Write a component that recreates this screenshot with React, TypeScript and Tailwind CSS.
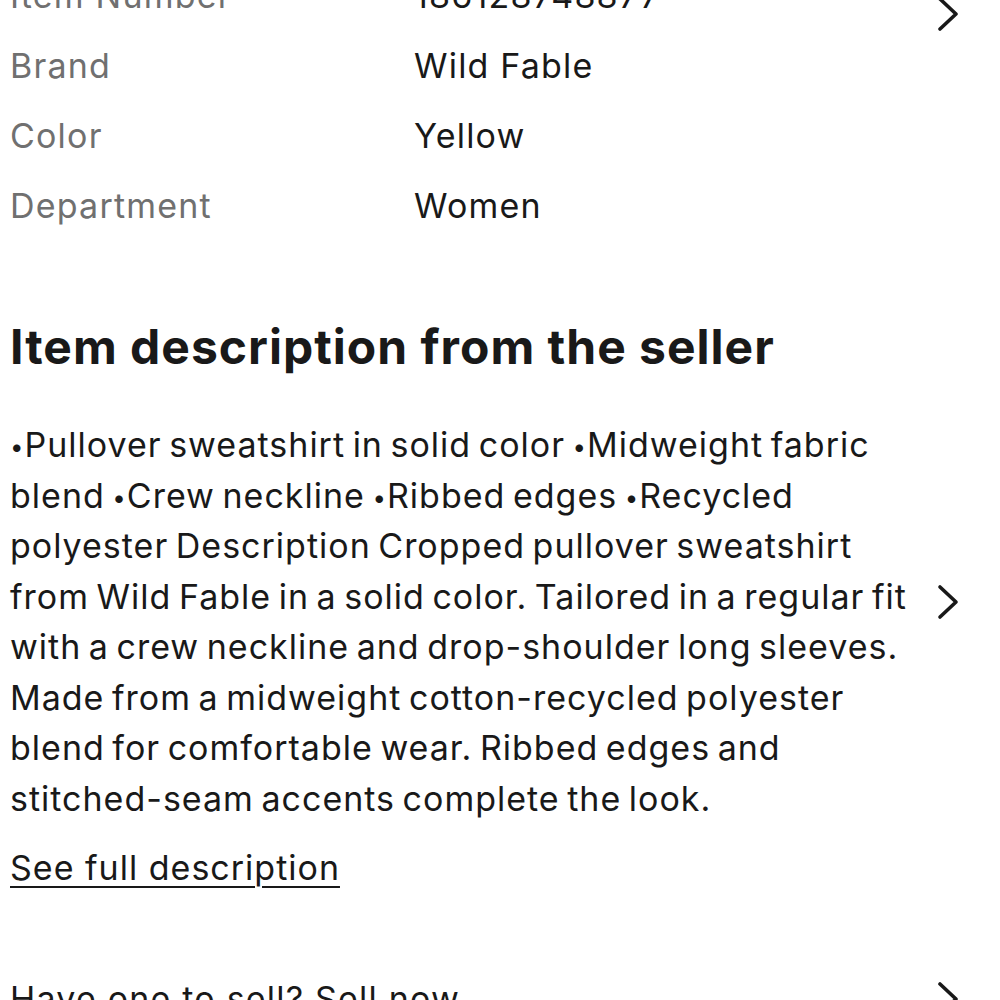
import React from 'react';

const Chevron: React.FC<{ className?: string }> = ({ className }) => (
  <svg className={className} width="24" height="36" viewBox="0 0 24 36" fill="none">
    <polyline points="4,3 20,18 4,33" stroke="#191919" strokeWidth="3.6" strokeLinecap="round" strokeLinejoin="round" />
  </svg>
);

const specs = [
  ['Item Number', '186128748877'],
  ['Brand', 'Wild Fable'],
  ['Color', 'Yellow'],
  ['Department', 'Women'],
];

// small bullet like the original font's
const B = () => <span className="text-[24px] leading-none align-[2px]">•</span>;

export default function App() {
  return (
    <div className="w-[1000px] h-[1000px] overflow-hidden bg-white text-[#191919] font-['Inter',sans-serif]">
      <div className="-mt-[40px]">
        <div className="flex pl-[10px] pr-[40px]">
          <div className="flex-1">
            {specs.map(([k, v]) => (
              <div key={k} className="flex h-[70px] items-center text-[34px] tracking-[1.2px]">
                <span className="w-[404px] text-[#707070]">{k}</span>
                <span>{v}</span>
              </div>
            ))}
          </div>
          <Chevron className="mt-[36px]" />
        </div>

        <h2 className="pl-[10px] mt-[77px] text-[48px] font-bold tracking-[1px] leading-[60px]">
          Item description from the seller
        </h2>

        <div className="flex pl-[10px] pr-[40px] mt-[43px]">
          <p className="flex-1 text-[34px] leading-[50.5px] tracking-[1px] [word-spacing:-3px] whitespace-nowrap">
            <B />Pullover sweatshirt in solid color <B />Midweight fabric
            <br />
            blend <B />Crew neckline <B />Ribbed edges <B />Recycled
            <br />
            polyester Description Cropped pullover sweatshirt
            <br />
            from Wild Fable in a solid color. Tailored in a regular fit
            <br />
            with a crew neckline and drop-shoulder long sleeves.
            <br />
            Made from a midweight cotton-recycled polyester
            <br />
            blend for comfortable wear. Ribbed edges and
            <br />
            stitched-seam accents complete the look.
          </p>
          <Chevron className="mt-[164px]" />
        </div>

        <a className="block pl-[10px] mt-[18px] text-[34px] leading-[51px] tracking-[1px] underline underline-offset-[6px] decoration-2">
          See full description
        </a>

        <div className="flex pl-[10px] pr-[40px] mt-[80px] items-center">
          <span className="flex-1 text-[34px] leading-[51px] tracking-[1.2px]">Have one to sell? Sell now</span>
          <Chevron />
        </div>
      </div>
    </div>
  );
}
